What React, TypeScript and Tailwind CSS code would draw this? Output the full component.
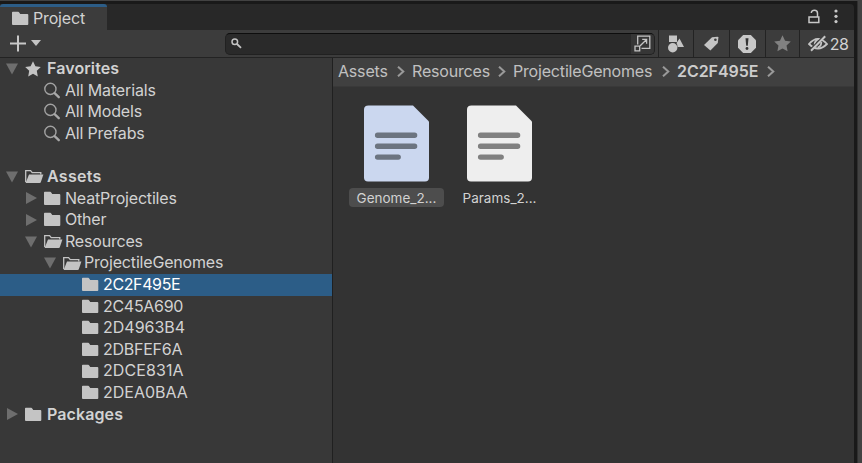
import type { ReactNode } from 'react';

function Folder({ className = '' }: { className?: string }) {
  return (
    <svg className={`shrink-0 ${className}`} width="17" height="15" viewBox="0 0 17 15" fill="#c4c4c4">
      <path d="M0 1.6Q0 .8.8.8H6.2Q6.8.8 7.2 1.5L8.2 3H15.4Q16.3 3 16.3 3.9V13.1Q16.3 14 15.4 14H.9Q0 14 0 13.1Z" />
    </svg>
  );
}

function OpenFolder() {
  return (
    <svg className="shrink-0" width="19" height="15" viewBox="0 0 19 15">
      <path d="M.7 13V1.6H5.6L7.2 3.6H15.8V5.6" fill="none" stroke="#c4c4c4" strokeWidth="1.3" />
      <path d="M4 5.6H18.4L15.8 13.2Q15.5 14 14.7 14H.6Z" fill="#c4c4c4" />
    </svg>
  );
}

function Arrow({ open }: { open: boolean }) {
  return (
    <svg className="shrink-0" width="12" height="12" viewBox="0 0 12 12" fill="#6e6e6e">
      {open ? <path d="M0 .5H12L6 11.5Z" /> : <path d="M1 0L12 6L1 12Z" />}
    </svg>
  );
}

function Star({ size, color }: { size: number; color: string }) {
  return (
    <svg className="shrink-0" width={size} height={size} viewBox="0 0 16 16" fill={color}>
      <path d="M8 .3L10.4 5.3L15.8 6L11.8 9.8L12.8 15.4L8 12.7L3.2 15.4L4.2 9.8L.2 6L5.6 5.3Z" />
    </svg>
  );
}

function Magnifier() {
  return (
    <svg className="shrink-0" width="17" height="17" viewBox="0 0 17 17" fill="none">
      <circle cx="6.4" cy="6.9" r="5.6" stroke="#a2a2a2" strokeWidth="1.4" />
      <path d="M10.6 11.2L14.8 15.2" stroke="#a8a8a8" strokeWidth="2.3" strokeLinecap="round" />
    </svg>
  );
}

type Kind = 'star' | 'search' | 'folder' | 'open';
interface Item {
  label: string;
  kind: Kind;
  depth: number;
  arrow?: 'open' | 'closed';
  selected?: boolean;
  spacing: string;
}

const items: (Item | null)[] = [
  { label: 'Favorites', kind: 'star', depth: 0, arrow: 'open', spacing: 'tracking-[0.1px]' },
  { label: 'All Materials', kind: 'search', depth: 1, spacing: 'tracking-[-0.14px]' },
  { label: 'All Models', kind: 'search', depth: 1, spacing: 'tracking-[-0.18px]' },
  { label: 'All Prefabs', kind: 'search', depth: 1, spacing: 'tracking-[-0.18px]' },
  null,
  { label: 'Assets', kind: 'open', depth: 0, arrow: 'open', spacing: 'tracking-[0.3px]' },
  { label: 'NeatProjectiles', kind: 'folder', depth: 1, arrow: 'closed', spacing: 'tracking-[-0.18px]' },
  { label: 'Other', kind: 'folder', depth: 1, arrow: 'closed', spacing: 'tracking-[-0.2px]' },
  { label: 'Resources', kind: 'open', depth: 1, arrow: 'open', spacing: 'tracking-[-0.2px]' },
  { label: 'ProjectileGenomes', kind: 'open', depth: 2, arrow: 'open', spacing: 'tracking-[-0.18px]' },
  { label: '2C2F495E', kind: 'folder', depth: 3, selected: true, spacing: 'tracking-[-0.38px]' },
  { label: '2C45A690', kind: 'folder', depth: 3, spacing: 'tracking-[-0.3px]' },
  { label: '2D4963B4', kind: 'folder', depth: 3, spacing: 'tracking-[0px]' },
  { label: '2DBFEF6A', kind: 'folder', depth: 3, spacing: 'tracking-[-0.25px]' },
  { label: '2DCE831A', kind: 'folder', depth: 3, spacing: 'tracking-[0.1px]' },
  { label: '2DEA0BAA', kind: 'folder', depth: 3, spacing: 'tracking-[0px]' },
  { label: 'Packages', kind: 'folder', depth: 0, arrow: 'closed', spacing: 'tracking-[0.1px]' },
];

const indents = ['pl-1.5', 'pl-[25px]', 'pl-11', 'pl-[63px]'];

function TreeRow({ item }: { item: Item }) {
  return (
    <div className={`flex h-[21.6px] items-center ${indents[item.depth]} ${item.selected ? 'bg-[#2c5d87] text-white' : ''}`}>
      <div className="w-[19px] shrink-0">{item.arrow && <Arrow open={item.arrow === 'open'} />}</div>
      <div className={`flex shrink-0 items-center ${item.depth === 0 ? 'w-[22px]' : 'w-[21px]'}`}>
        {item.kind === 'star' && <Star size={16} color="#c4c4c4" />}
        {item.kind === 'search' && <Magnifier />}
        {item.kind === 'folder' && <Folder />}
        {item.kind === 'open' && <OpenFolder />}
      </div>
      <span className={`whitespace-nowrap pb-[1.6px] ${item.spacing} ${item.depth === 0 ? 'font-semibold' : ''}`}>{item.label}</span>
    </div>
  );
}

function Chevron() {
  return (
    <svg className="shrink-0" width="8" height="11" viewBox="0 0 8 11" fill="none" stroke="#999" strokeWidth="2">
      <path d="M1 .7L6.3 5.5L1 10.3" />
    </svg>
  );
}

function ToolButton({ width, children }: { width: string; children: ReactNode }) {
  return <div className={`flex h-full items-center justify-center border-l border-[#232323] ${width}`}>{children}</div>;
}

function FileAsset({ name, spacing, selected }: { name: string; spacing: string; selected?: boolean }) {
  return (
    <div className="flex w-[95px] flex-col items-center">
      <svg width="65" height="77" viewBox="0 0 65 77">
        <path d="M4.5 .5H49L65 16.5V72.5Q65 76.5 61 76.5H4Q0 76.5 0 72.5V4.5Q0 .5 4.5 .5Z" fill={selected ? '#cbd7ef' : '#eeeeee'} />
        <g stroke={selected ? '#6c7480' : '#808080'} strokeWidth="5.4" strokeLinecap="round">
          <path d="M13.6 30.3H50.6M13.6 41.2H50.6M13.6 52.1H34.2" />
        </g>
      </svg>
      <div className={`mt-1.5 flex h-[19px] w-full items-center justify-center rounded-[4px] text-[13.5px] ${spacing} ${selected ? 'bg-[#4d4d4d]' : ''}`}>
        {name}
      </div>
    </div>
  );
}

export default function App() {
  return (
    <div className="flex h-[463px] w-[862px] overflow-hidden border-t border-[#424242] bg-[#191919] font-['Inter',sans-serif] text-[16px] leading-5 text-[#d2d2d2]">
      <div className="flex w-[854px] flex-col pt-[3px]">
        <header className="flex h-[26px] shrink-0 rounded-tr-[4px] bg-[#282828]">
          <div className="flex w-[107px] items-center rounded-t-[3px] border-t-[3px] border-[#2c5d87] bg-[#3c3c3c] pl-3">
            <Folder className="mb-px" />
            <span className="ml-1 pb-[2px] tracking-[-0.15px]">Project</span>
          </div>
          <div className="ml-auto flex items-center pb-[2px]">
            <svg width="12" height="15" viewBox="0 0 12 15" fill="none" stroke="#c8c8c8" strokeWidth="1.5">
              <path d="M1 8H10.8V13.5H1ZM9.5 8V4.2C9.5 .3 3.3 .3 3.3 4" />
            </svg>
            <svg className="mr-4 ml-[14px]" width="4" height="15" viewBox="0 0 4 15" fill="#c8c8c8">
              <circle cx="2" cy="2" r="1.6" /><circle cx="2" cy="7.3" r="1.6" /><circle cx="2" cy="12.6" r="1.6" />
            </svg>
          </div>
        </header>

        <div className="flex h-7 shrink-0 items-center border-b border-[#232323] bg-[#3c3c3c] pl-[9px]">
          <svg width="18" height="17" viewBox="0 0 18 17" stroke="#c8c8c8" strokeWidth="2"><path d="M1 8.5H17M9 .5V16.5" /></svg>
          <svg className="mt-[-1px] ml-1" width="10" height="6" viewBox="0 0 10 6" fill="#c4c4c4"><path d="M0 0H10L5 6Z" /></svg>
          <div className="ml-[184px] flex h-[22px] w-[430px] items-center overflow-hidden rounded-[5px] border border-[#212121] border-t-[#0d0d0d] bg-[#2a2a2a] pl-[5px]">
            <svg width="11" height="11" viewBox="0 0 11 11" fill="none" stroke="#c4c4c4" strokeWidth="1.5">
              <circle cx="3.8" cy="3.8" r="2.8" /><path d="M6 6L10 9.8" strokeWidth="1.8" />
            </svg>
            <div className="ml-auto flex h-full w-[23px] items-center justify-center bg-[#363636]">
              <svg width="17" height="17" viewBox="0 0 17 17" fill="none" stroke="#c4c4c4" strokeWidth="1.3">
                <path d="M3.7 9.5V1.2H15.8V13.3H7.5M1 11.2H5.7V15.9H1ZM6.2 10.8L12.3 4.7M8.2 4.4H12.6V8.8" />
              </svg>
            </div>
          </div>
          <div className="mr-px ml-auto flex h-full">
            <ToolButton width="w-[35px]">
              <svg width="16" height="18" viewBox="0 0 16 18" fill="#c4c4c4">
                <path d="M1 .5H9V7H1ZM11.5 3.5L16 12H9.6Q9.2 8.2 8.5 7.9Z" /><circle cx="4.7" cy="12.7" r="4.7" />
              </svg>
            </ToolButton>
            <ToolButton width="w-9">
              <svg width="15" height="15" viewBox="0 0 15 15">
                <path d="M0 9L8 1.3L13.5 .7Q14.4.7 14.4 1.6L13.8 7L6.4 14.5Z" fill="#c4c4c4" /><circle cx="11.4" cy="3.8" r="1.3" fill="#3c3c3c" />
              </svg>
            </ToolButton>
            <ToolButton width="w-[36px] pr-[2px]">
              <svg width="18" height="18" viewBox="0 0 18 18">
                <path d="M5.2 0H12.8L18 5.2V12.8L12.8 18H5.2L0 12.8V5.2Z" fill="#c8c8c8" />
                <path d="M7.5 3.3H10.5L9.8 10.8H8.2Z" fill="#333" /><circle cx="9" cy="13.5" r="1.4" fill="#333" />
              </svg>
            </ToolButton>
            <ToolButton width="w-[34px]"><Star size={17} color="#818181" /></ToolButton>
            <ToolButton width="w-[54px] pl-[3px]">
              <svg width="20" height="17" viewBox="0 0 20 17" fill="none" stroke="#c4c4c4" strokeWidth="1.8">
                <path d="M1 9Q9.8-1.4 19 9Q10 18 1 9Z" />
                <path d="M11 4.2Q6.3 5.4 6.7 10.7M13.3 7Q13.4 11 9.8 12.6" />
                <path d="M16.4 .5L2.2 15" stroke="#3c3c3c" strokeWidth="2" />
                <path d="M17.2 1.2L3 15.7" strokeWidth="2" />
              </svg>
              <span className="ml-0.5 text-[16px] tracking-[-0.7px]">28</span>
            </ToolButton>
          </div>
        </div>

        <main className="flex min-h-0 flex-1">
          <aside className="w-[333px] shrink-0 border-r border-[#202020] bg-[#383838]">
            {items.map((item, i) => item ? <TreeRow key={item.label} item={item} /> : <div key={i} className="h-[21.6px]" />)}
          </aside>
          <section className="flex-1 bg-[#333333]">
            <nav className="flex h-[29px] items-center border-b border-[#393939] bg-[#404040] pb-px pl-[5px] tracking-[-0.18px] text-[#c0c0c0]">
              <span className="w-[59px] pb-px">Assets</span><Chevron />
              <span className="ml-[7px] w-[86px] pb-px">Resources</span><Chevron />
              <span className="ml-[7px] w-[149px] pb-px">ProjectileGenomes</span><Chevron />
              <span className="ml-[7px] w-[90px] pb-px font-semibold tracking-[-0.05px] text-[#cccccc]">2C2F495E</span><Chevron />
            </nav>
            <div className="flex gap-2 pt-[18px] pl-4">
              <FileAsset name="Genome_2..." spacing="tracking-[0px]" selected />
              <FileAsset name="Params_2..." spacing="tracking-[0px]" />
            </div>
          </section>
        </main>
      </div>
      <div className="ml-[3px] flex-1 border-l border-[#303030] bg-[#424242]" />
    </div>
  );
}
